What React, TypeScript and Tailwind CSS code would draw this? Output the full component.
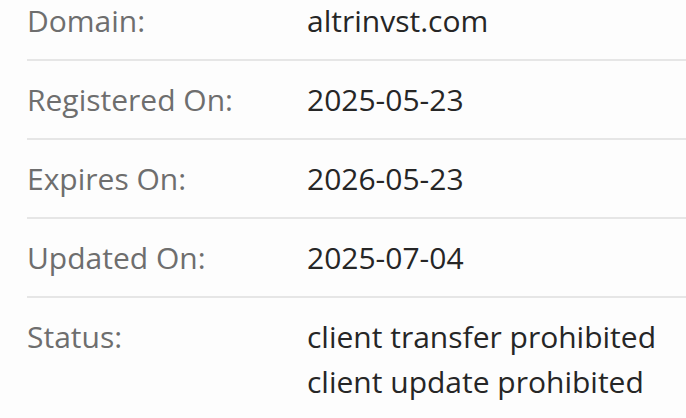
const rows = [
  { label: "Domain:", value: ["altrinvst.com"] },
  { label: "Registered On:", value: ["2025-05-23"] },
  { label: "Expires On:", value: ["2026-05-23"] },
  { label: "Updated On:", value: ["2025-07-04"] },
  { label: "Status:", value: ["client transfer prohibited", "client update prohibited"] },
];

export default function App() {
  return (
    <div className="w-[686px] h-[418px] overflow-hidden bg-[#fdfdfd] font-['Open_Sans',sans-serif]">
      <div className="-mt-[18px] ml-[27px]">
        {rows.map((row, i) => (
          <div
            key={row.label}
            className={`flex py-4 text-[30px] leading-[45px] ${i < rows.length - 1 ? "border-b-2 border-[#e6e6e6]" : ""}`}
          >
            <div className="w-[280px] shrink-0 text-[#6e6e6e]">{row.label}</div>
            <div className="text-[#262626]">
              {row.value.map((v) => (
                <div key={v}>{v}</div>
              ))}
            </div>
          </div>
        ))}
      </div>
    </div>
  );
}
